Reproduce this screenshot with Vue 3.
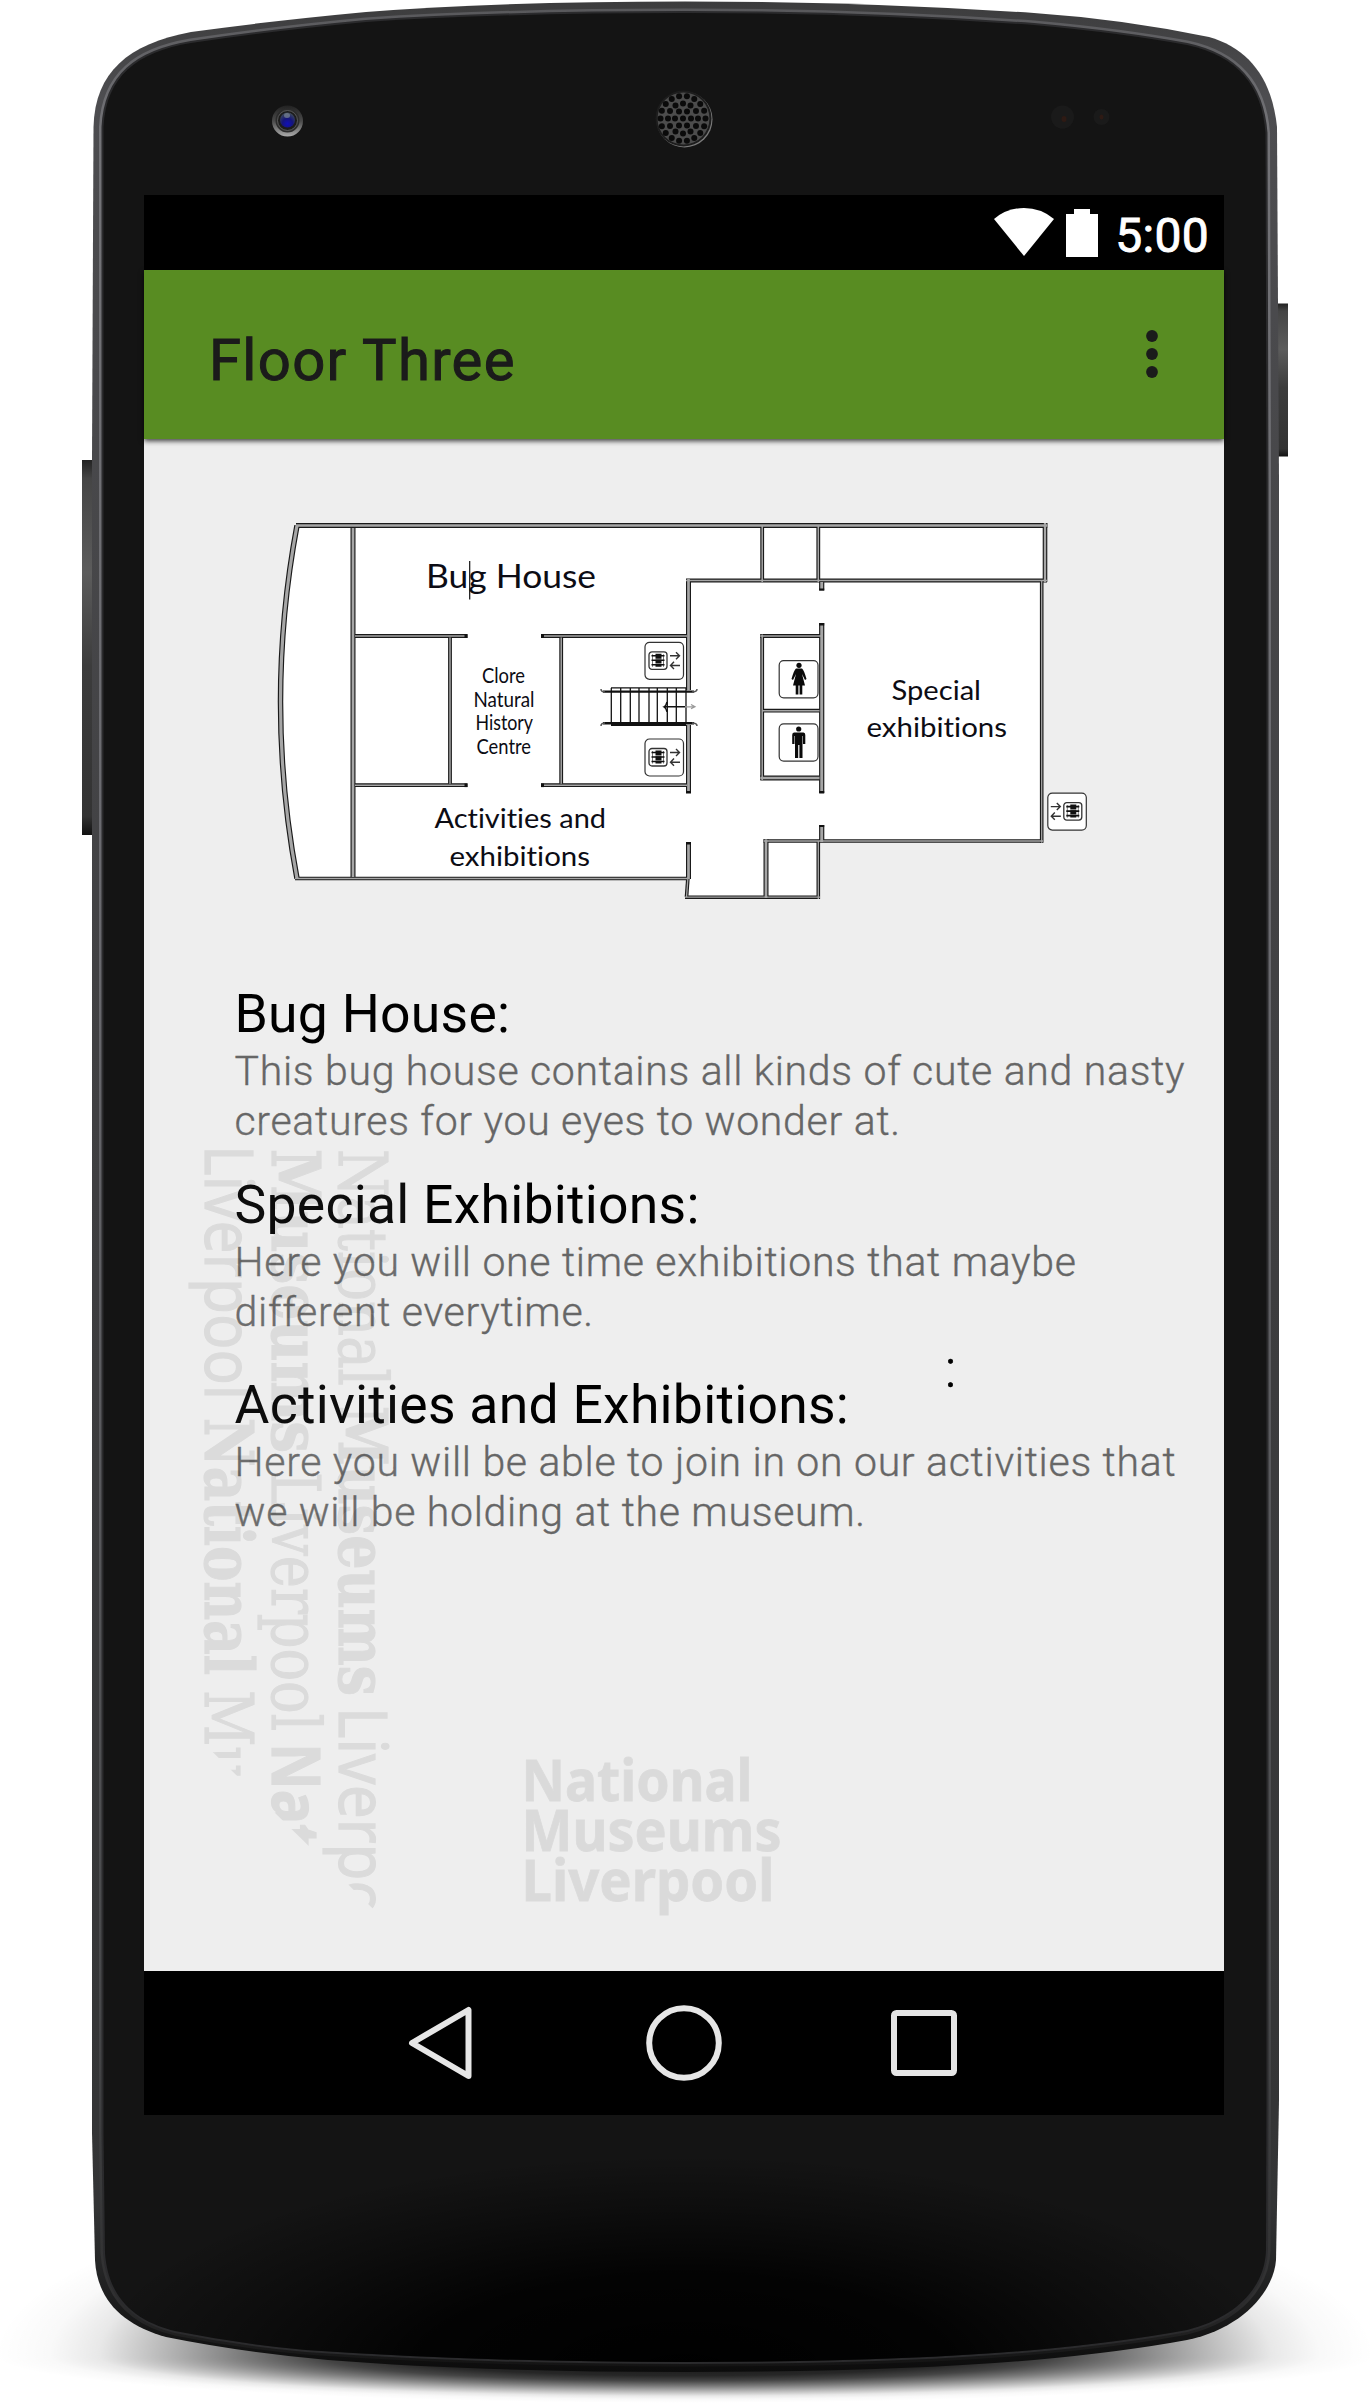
<script setup>
// Double-line walls: centre path and overall thickness
const walls = [
  { d: 'M296 525.5H1047.3', w: 5 },
  { d: 'M297 525.5Q264 702 297 878.5', w: 5.5 },
  { d: 'M295 878.5H687', w: 3.6 },
  { d: 'M353 528V877', w: 5 },
  { d: 'M355 636H467.5M541 636H687M355 785.2H467.5M541 785.2H687', w: 3.8 },
  { d: 'M450 637.5V783.7M561.2 637.5V783.7', w: 3.8 },
  { d: 'M688.5 579V690M688.5 725V793M688.5 842V879', w: 5 },
  { d: 'M688 877L686.5 897', w: 3.6 },
  { d: 'M685 897.2H820', w: 3.6 },
  { d: 'M686 580.5H1047', w: 3.8 },
  { d: 'M762.2 525V582M818.3 525V582', w: 3.8 },
  { d: 'M1045 523V582', w: 4.6 },
  { d: 'M1041.7 580V842.7', w: 3.6 },
  { d: 'M820 841H1043', w: 3.6 },
  { d: 'M821.7 582V590.5M821.7 623V793M821.7 825V842', w: 5.2 },
  { d: 'M762.2 634.5V780', w: 3.8 },
  { d: 'M760.3 636H822M762 710.7H819.5', w: 3.8 },
  { d: 'M760.3 778H819.5', w: 4.8 },
  { d: 'M766 839.3V898', w: 5 },
  { d: 'M763.5 841H820M818.3 841V899', w: 3.6 },
]
const doorEnds = [
  [464.5, 634.3, 3, 3.6], [541, 634.3, 3, 3.6], [464.5, 783.5, 3, 3.6], [541, 783.5, 3, 3.6],
  [819.2, 623, 5, 2.5], [819.2, 791, 5, 2.5], [819.2, 825, 5, 2], [819.2, 588.5, 5, 2],
  [686, 842, 5, 2.5], [686, 791, 5, 2.5],
]
const mapLabels = [
  { t: 'Bug House', x: 426, y: 588, s: 33.5, l: 170 },
  { t: 'Clore', x: 482, y: 682.7, s: 20.5, l: 43 },
  { t: 'Natural', x: 473.5, y: 707, s: 20.5, l: 61 },
  { t: 'History', x: 475.5, y: 730, s: 20.5, l: 57.5 },
  { t: 'Centre', x: 476.5, y: 754.3, s: 20.5, l: 54.5 },
  { t: 'Activities and', x: 434.5, y: 827.7, s: 27, l: 171.5 },
  { t: 'exhibitions', x: 449.5, y: 866, s: 27, l: 140.5 },
  { t: 'Special', x: 891.5, y: 700, s: 27, l: 89.5 },
  { t: 'exhibitions', x: 866.5, y: 737.3, s: 27, l: 140.5 },
]
const steps = [611.3, 620.7, 630.3, 639, 649, 657.3, 667.3, 676.3, 686]
const lifts = [
  { x: 644.5, y: 641.8, car: 4.5, arrows: 25.5 },
  { x: 644.5, y: 738.5, car: 4.5, arrows: 25.5 },
  { x: 1047.3, y: 792.6, car: 16.5, arrows: 3.5 },
]

// Sideways wordmark: x = baseline, y = start, l = length
const strips = [
  { t: 'Liverpool', x: 205, y: 1145, l: 255, sans: true },
  { t: 'National', x: 205, y: 1418, l: 257, b: true },
  { t: 'Mu', x: 205, y: 1690, l: 92 },
  { t: 'Museums', x: 272, y: 1149, l: 304, b: true },
  { t: 'Liverpool', x: 272, y: 1472, l: 259 },
  { t: 'Nat', x: 272, y: 1743, l: 106, b: true, sans: true },
  { t: 'National', x: 339, y: 1149, l: 237 },
  { t: 'Museums', x: 339, y: 1406, l: 290, b: true },
  { t: 'Liverpo', x: 339, y: 1707, l: 210, sans: true },
]
const logo = [
  { t: 'National', y: 1801, l: 231 },
  { t: 'Museums', y: 1851, l: 260 },
  { t: 'Liverpool', y: 1900.6, l: 253 },
]

const sections = [
  { h: 'Bug House:', lines: ['This bug house contains all kinds of cute and nasty', 'creatures for you eyes to wonder at.'] },
  { h: 'Special Exhibitions:', lines: ['Here you will one time exhibitions that maybe', 'different everytime.'] },
  { h: 'Activities and Exhibitions:', lines: ['Here you will be able to join in on our activities that', 'we will be holding at the museum.'] },
]

// Speaker grille: concentric rings of holes
const holes = [[0, 0]]
for (const [r, n] of [[8, 6], [15, 12], [22.5, 18]]) {
  for (let i = 0; i < n; i++) {
    const a = (i / n) * Math.PI * 2
    holes.push([r * Math.cos(a), r * Math.sin(a)])
  }
}
</script>

<template>
  <div class="stage">
    <svg class="body" width="1370" height="2405" viewBox="0 0 1370 2405">
      <defs>
        <radialGradient id="shade">
          <stop offset="0" stop-color="#000" stop-opacity=".95" />
          <stop offset=".42" stop-color="#000" stop-opacity=".85" />
          <stop offset=".53" stop-color="#000" stop-opacity=".73" />
          <stop offset=".64" stop-color="#000" stop-opacity=".52" />
          <stop offset=".75" stop-color="#000" stop-opacity=".29" />
          <stop offset=".85" stop-color="#000" stop-opacity=".09" />
          <stop offset=".92" stop-color="#000" stop-opacity=".025" />
          <stop offset="1" stop-color="#000" stop-opacity="0" />
        </radialGradient>
        <linearGradient id="rim" x1="0" y1="0" x2="0" y2="1">
          <stop offset="0" stop-color="#3c3c3d" />
          <stop offset=".04" stop-color="#4d4d50" />
          <stop offset=".5" stop-color="#3e3e40" />
          <stop offset=".93" stop-color="#333435" />
          <stop offset="1" stop-color="#0c0c0c" />
        </linearGradient>
        <linearGradient id="shine" gradientUnits="userSpaceOnUse" x1="0" y1="10" x2="0" y2="2365">
          <stop offset="0" stop-color="#59595c" />
          <stop offset=".05" stop-color="#737377" />
          <stop offset=".4" stop-color="#69696e" />
          <stop offset=".85" stop-color="#47484a" />
          <stop offset=".97" stop-color="#303031" />
          <stop offset="1" stop-color="#141414" />
        </linearGradient>
        <radialGradient id="dim" gradientUnits="userSpaceOnUse" cx="0" cy="0" r="1" gradientTransform="translate(685 2370) scale(600 215)">
          <stop offset="0" stop-color="#000" />
          <stop offset=".45" stop-color="#000" stop-opacity=".85" />
          <stop offset=".75" stop-color="#000" stop-opacity=".35" />
          <stop offset="1" stop-color="#000" stop-opacity="0" />
        </radialGradient>
        <linearGradient id="key" x1="0" y1="0" x2="0" y2="1">
          <stop offset="0" stop-color="#222" />
          <stop offset=".05" stop-color="#454545" />
          <stop offset=".3" stop-color="#5c5c5c" />
          <stop offset=".55" stop-color="#3c3c3c" />
          <stop offset=".95" stop-color="#333" />
          <stop offset="1" stop-color="#111" />
        </linearGradient>
        <linearGradient id="ring" x1="0" y1="0" x2="0" y2="1">
          <stop offset="0" stop-color="#222" />
          <stop offset=".5" stop-color="#4a4a4a" />
          <stop offset="1" stop-color="#aaa" />
        </linearGradient>
        <radialGradient id="lens" cx=".5" cy=".75" r=".7">
          <stop offset="0" stop-color="#1010b8" />
          <stop offset=".5" stop-color="#15157a" />
          <stop offset="1" stop-color="#3b4658" />
        </radialGradient>
        <clipPath id="upper"><rect x="-20" y="2100" width="1410" height="256" /></clipPath>
        <clipPath id="lower"><rect x="-20" y="2356" width="1410" height="49" /></clipPath>
      </defs>
      <ellipse cx="685" cy="2356" rx="690" ry="185" fill="url(#shade)" clip-path="url(#upper)" />
      <ellipse cx="685" cy="2356" rx="690" ry="47" fill="url(#shade)" clip-path="url(#lower)" />
      <rect x="82" y="460" width="13" height="375" fill="url(#key)" />
      <rect x="1276" y="303.500" width="12" height="153" fill="url(#key)" />
      <path fill="url(#rim)" d="M92 460V2133L95 2260C97 2300 123 2325 166 2337Q240 2352 328 2360Q480 2372 685 2372Q900 2372 1034 2360Q1122 2352 1187 2340C1244 2328 1274 2290 1276 2260L1279 2100V480L1277 127C1272 78 1248 48 1209 37Q1122 19 1034 13Q860 1.500 685 1.500Q500 1.500 366 12Q270 21 191 32C128 44 95 72 93.500 127Z" />
      <g>
        <path v-for="(s, i) in [{ w: 9, c: 'url(#shine)' }, { w: 4, c: '#2b2b2d' }]" :key="i" fill="none" :stroke="s.c" :stroke-width="s.w" d="M103.500 460V2133L105 2253C108 2294 130 2320 175 2331Q240 2344 306 2350Q480 2362 685 2362Q900 2362 1034 2350Q1122 2342 1187 2330C1238 2317 1265 2286 1266 2250L1266.500 2100V480L1265.500 133C1262 86 1238 56 1187 45Q1122 33 1034 25Q860 13 685 13Q500 13 366 22Q270 31 191 43C137 52 106 76 103.500 127Z" />
        <path fill="#141414" d="M103.500 460V2133L105 2253C108 2294 130 2320 175 2331Q240 2344 306 2350Q480 2362 685 2362Q900 2362 1034 2350Q1122 2342 1187 2330C1238 2317 1265 2286 1266 2250L1266.500 2100V480L1265.500 133C1262 86 1238 56 1187 45Q1122 33 1034 25Q860 13 685 13Q500 13 366 22Q270 31 191 43C137 52 106 76 103.500 127Z" />
        <path fill="url(#dim)" d="M105 2140V2253C108 2294 130 2320 175 2331Q240 2344 306 2350Q480 2362 685 2362Q900 2362 1034 2350Q1122 2342 1187 2330C1238 2317 1265 2286 1266 2250V2140Z" />
      </g>
      <circle cx="287.500" cy="121" r="15.500" fill="url(#ring)" />
      <circle cx="287.500" cy="120.500" r="12" fill="#2c2c2c" />
      <circle cx="287.500" cy="120.500" r="10" fill="#1c1c1c" stroke="#666" stroke-width=".8" />
      <circle cx="287.500" cy="120" r="7.500" fill="url(#lens)" />
      <ellipse cx="287" cy="115.500" rx="3" ry="2.500" fill="#7c8794" opacity=".7" />
      <circle cx="684.500" cy="119.500" r="28" fill="#7a7a7a" />
      <circle cx="683.500" cy="118.500" r="28" fill="#1d1d1d" />
      <circle cx="683.500" cy="118.500" r="26" fill="#4c4c4c" />
      <circle v-for="(h, i) in holes" :key="'h' + i" :cx="683 + h[0]" :cy="118.500 + h[1]" r="3" fill="#0a0a0a" />
      <circle cx="1062.500" cy="117" r="11.500" fill="#1a1a1a" />
      <circle cx="1101.500" cy="117" r="8" fill="#1a1a1a" />
      <ellipse cx="1064" cy="119" rx="2.500" ry="3" fill="#2e1a14" />
      <ellipse cx="1101.500" cy="117" rx="2" ry="2.500" fill="#2e1a14" />
    </svg>

    <div class="screen">
      <div class="status">
        <svg class="wifi" width="60" height="48" viewBox="0 0 60 48"><path fill="#fff" d="M0 11Q13 0 30 0T60 11L30 48Z" /></svg>
        <svg class="battery" width="32" height="48" viewBox="0 0 32 48"><path fill="#fff" d="M8 0H24V5H32V48H0V5H8Z" /></svg>
        <span class="clock">5:00</span>
      </div>
      <header class="bar">
        <h1>Floor Three</h1>
        <svg width="12" height="48" viewBox="0 0 12 48"><circle v-for="y in [6, 24, 42]" :key="y" cx="6" :cy="y" r="5.900" fill="#1b1b1b" /></svg>
      </header>

      <main class="content">
        <svg class="plan" width="830" height="395" viewBox="270 510 830 395">
          <path fill="#fff" d="M297 525H1046V582H1042V841H820V897H686L688 878H297Q264 702 297 525Z" />
          <path v-for="(w, i) in walls" :key="'w' + i" :d="w.d" fill="none" stroke="#1a1a1a" :stroke-width="w.w" />
          <path v-for="(w, i) in walls" :key="'g' + i" :d="w.d" fill="none" stroke="#a6a6a6" :stroke-width="w.w - 2.300" />
          <rect v-for="(e, i) in doorEnds" :key="'e' + i" :x="e[0]" :y="e[1]" :width="e[2]" :height="e[3]" fill="#111" />
          <g fill="none" stroke="#111">
            <path stroke-width="1.200" d="M611 687.800H686" />
            <path stroke-width="2.400" d="M603 691.600H694M603 723.300H694" />
            <path stroke-width="2.200" d="M611 725H686" />
            <path stroke="#555" stroke-width="1.500" d="M605 692q-4 0-4-3M605 723q-4 0-4 3M692 692q5 0 5-3M692 723q5 0 5 3" />
            <path v-for="x in steps" :key="x" stroke-width="1.300" :d="`M${x} 688V723`" />
            <path stroke-width="1.400" d="M665 706.800H685M667 702q-1 4-3 4.800q2 1 3 5" />
          </g>
          <path d="M685 706.800H695M691 704.500l4 2.300l-4 2" fill="none" stroke="#999" stroke-width="1.200" />

          <g v-for="(f, i) in lifts" :key="'f' + i" :transform="`translate(${f.x} ${f.y})`" fill="none" stroke="#333" stroke-width="1.200">
            <rect x=".5" y=".5" width="38.500" height="37" rx="4.500" fill="#fff" />
            <g :transform="`translate(${f.car} 10)`">
              <rect width="18" height="17.500" rx="3" stroke-width="1.300" />
              <path stroke="#777" stroke-width="1" d="M3.500 2.500V15M14.500 2.500V15" />
              <path stroke="#111" stroke-width="1.600" d="M2.500 4H15.500M2.500 8.500H15.500M2.500 13H15.500" />
              <path stroke="#111" stroke-width="6" d="M9.500 2V7M9.500 7.700V11.500M9.500 12V15" />
            </g>
            <path :transform="`translate(${f.arrows} 0)`" stroke-width="1.400" d="M0 14H9.500M6 10.500L9.500 14L6 17.500M10 23.700H.5M4 20L.5 23.700L4 27.200" />
          </g>
          <g fill="#fff" stroke="#333" stroke-width="1.200">
            <rect x="779.200" y="660.600" width="38.800" height="37.200" rx="4.500" />
            <rect x="779.200" y="723.900" width="38.800" height="37.200" rx="4.500" />
          </g>
          <g fill="#0a0a0a">
            <circle cx="799" cy="665.300" r="2.600" />
            <path d="M796 668.500H802Q804 670 806.500 679L805 680L802 674L805 685.500H802.300V694.500H799.600V685.500H798.400V694.500H795.700V685.500H793L796 674L793 680L791.500 679Q794 670 796 668.500Z" />
            <circle cx="798.700" cy="729" r="2.600" />
            <path d="M794 732.500H803.500Q805.300 732.500 805.300 735V744H803V736H802.500V758H799.400V745H798.200V758H795V736H794.500V744H792.200V735Q792.200 732.500 794 732.500Z" />
          </g>
          <text v-for="(m, i) in mapLabels" :key="'t' + i" class="map-label" :x="m.x" :y="m.y" :font-size="m.s" :textLength="m.l" lengthAdjust="spacingAndGlyphs">{{ m.t }}</text>
          <path d="M469.700 561V599.500" stroke="#111" stroke-width="1.200" />
        </svg>

        <section v-for="(s, i) in sections" :key="i" class="entry">
          <h2>{{ s.h }}</h2>
          <p v-for="l in s.lines" :key="l">{{ l }}</p>
        </section>
        <span class="stray">:</span>

        <svg class="mark" width="1080" height="1532" viewBox="144 439 1080 1532">
          <defs>
            <clipPath id="cut"><path d="M184 1120H408V1943L184 1724Z" /></clipPath>
          </defs>
          <g clip-path="url(#cut)">
            <rect x="184" y="1124" width="224" height="819" fill="#fff" fill-opacity=".05" />
            <g class="ink">
              <text v-for="(s, i) in strips" :key="i" class="strip" :class="{ bold: s.b, sans: s.sans }" :transform="`translate(${s.x} ${s.y}) rotate(90)`" :textLength="s.l" lengthAdjust="spacingAndGlyphs">{{ s.t }}</text>
            </g>
          </g>
          <rect x="408" y="1719" width="420" height="224" fill="#fff" fill-opacity=".05" />
          <g class="ink">
            <text v-for="l in logo" :key="l.t" class="logo" x="521.500" :y="l.y" :textLength="l.l" lengthAdjust="spacingAndGlyphs">{{ l.t }}</text>
          </g>
        </svg>
      </main>

      <nav class="nav">
        <svg width="66" height="76" viewBox="0 0 66 76"><path d="M60.500 5V71L4 38Z" fill="none" stroke="#e6e6e6" stroke-width="6" stroke-linejoin="round" /></svg>
        <svg width="76" height="76" viewBox="0 0 76 76"><circle cx="38" cy="38" r="34.800" fill="none" stroke="#e6e6e6" stroke-width="6" /></svg>
        <svg width="66" height="66" viewBox="0 0 66 66"><rect x="3" y="3" width="60" height="60" rx="2.500" fill="none" stroke="#e6e6e6" stroke-width="6" /></svg>
      </nav>
    </div>
  </div>
</template>

<style>
body { margin: 0; background: #fff; }
</style>

<style scoped>
.stage {
  position: relative;
  box-sizing: border-box;
  width: 1370px;
  height: 2405px;
  padding: 195px 146px 0 144px;
  overflow: hidden;
  font-family: Roboto, sans-serif;
}
.body { position: absolute; left: 0; top: 0; }
.screen {
  position: relative;
  display: flex;
  flex-direction: column;
  width: 1080px;
  height: 1920px;
  background: #000;
}
.status {
  display: flex;
  align-items: flex-start;
  justify-content: flex-end;
  height: 75px;
  box-sizing: border-box;
  padding: 13px 15px 0 0;
}
.battery { margin: 1px 17px 0 12px; }
.clock {
  color: #fff;
  font-size: 48px;
  font-weight: 400;
  line-height: 56px;
  letter-spacing: .3px;
  -webkit-text-stroke: .9px #fff;
}
.bar {
  position: relative;
  z-index: 1;
  display: flex;
  align-items: center;
  justify-content: space-between;
  height: 169px;
  box-sizing: border-box;
  padding: 0 66px 2px 65px;
  background: #588c22;
  box-shadow: 0 2px 5px rgba(0, 0, 0, .75);
}
h1 {
  margin: 12px 0 0;
  color: #1b1b1b;
  font-size: 58px;
  font-weight: 400;
  line-height: 68px;
  letter-spacing: 1.300px;
  -webkit-text-stroke: 1px #1b1b1b;
}
.content {
  position: relative;
  height: 1532px;
  background: #eee;
  overflow: hidden;
}
.plan { display: block; margin: 71px 0 0 126px; }
.map-label {
  font-family: Lato, sans-serif;
  font-variant-ligatures: none;
  fill: #0c0c14;
}
.entry {
  padding: 0 0 0 90.500px;
  margin-top: 24px;
  white-space: nowrap;
}
.plan + .entry { margin-top: 75px; }
.entry:nth-of-type(3) { margin-top: 33px; }
h2 {
  margin: 0;
  color: #000;
  font-size: 53.500px;
  font-weight: 400;
  line-height: 67px;
  letter-spacing: .25px;
}
p {
  position: relative;
  top: -1px;
  margin: 0;
  color: #666;
  font-size: 41px;
  font-weight: 300;
  line-height: 50px;
  letter-spacing: .7px;
  -webkit-text-stroke: .35px #666;
}
.stray {
  position: absolute;
  left: 801px;
  top: 900px;
  font-size: 53px;
  font-weight: 300;
  line-height: 60px;
  -webkit-text-stroke: .7px #000;
}
.mark { position: absolute; left: 0; top: 0; }
.ink { opacity: .08; }
.strip {
  font-family: "DejaVu Serif", serif;
  font-size: 67px;
  stroke: #000;
  stroke-width: 1.200px;
}
.sans { font-family: "Noto Sans", sans-serif; }
.bold { font-weight: 700; }
.logo { font-family: "Noto Sans", sans-serif; font-size: 58px; font-weight: 700; stroke: #000; stroke-width: .8px; }
.nav {
  display: flex;
  align-items: center;
  height: 144px;
  padding: 0 0 0 264px;
}
.nav svg:nth-child(2) { margin: 0 169px 0 172px; }
</style>
